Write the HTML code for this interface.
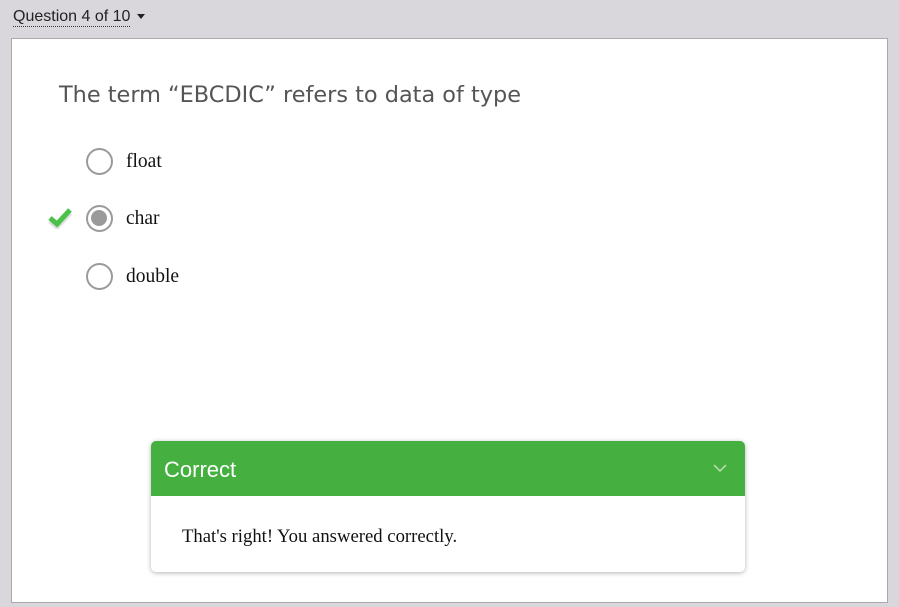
<!DOCTYPE html>
<html><head><style>
body{margin:0;width:899px;height:607px;background:#d9d7dc;position:relative;overflow:hidden;font-family:"Liberation Serif",serif}
.top{position:absolute;left:13px;top:8px;font:16px "Liberation Sans",sans-serif;color:#222;border-bottom:1px dotted #333;line-height:18px}
.caret{position:absolute;left:137px;top:14px;width:0;height:0;border-left:4.5px solid transparent;border-right:4.5px solid transparent;border-top:5px solid #222}
.card{position:absolute;left:11px;top:38px;width:875px;height:563px;background:#fff;border:1px solid #aaa}
.q{position:absolute;left:59px;top:82px;font:22.4px "DejaVu Sans",sans-serif;color:#555}
.opt{position:absolute;left:126px;font-size:19.5px;color:#111}
.rad{position:absolute;left:86px;border:2.5px solid #9a9a9a;border-radius:50%;box-sizing:border-box;width:27px;height:27px}
.dot{position:absolute;left:3px;top:3px;width:16px;height:16px;border-radius:50%;background:#9a9a9a}
.fb{position:absolute;left:151px;top:441px;width:594px;height:131px;background:#fff;border-radius:5px;box-shadow:0 1px 5px rgba(0,0,0,.3);overflow:hidden}
.fh{height:55px;background:#45b03f;color:#fff;font:22px "Liberation Sans",sans-serif;line-height:58px;padding-left:13px;position:relative}
.fb p{margin:0;position:absolute;left:31px;top:85px;font-size:18.7px;color:#111}
</style></head><body>
<div class="top">Question 4 of 10</div><div class="caret"></div>
<div class="card"></div>
<div class="q">The term “EBCDIC” refers to data of type</div>
<div class="rad" style="top:148px"></div><div class="opt" style="top:151px">float</div>
<svg style="position:absolute;left:47px;top:207px" width="27" height="22" viewBox="0 0 27 22"><path d="M3 12 L10 18 L23 4" stroke="#ddd" stroke-width="5" fill="none" transform="translate(0,2)"/><path d="M3 11 L10 17 L23 3" stroke="#4cc14a" stroke-width="5" fill="none"/></svg>
<div class="rad" style="top:205px"><div class="dot"></div></div><div class="opt" style="top:208px">char</div>
<div class="rad" style="top:263px"></div><div class="opt" style="top:266px">double</div>
<div class="fb"><div class="fh">Correct<svg style="position:absolute;right:18px;top:23px" width="14" height="9"><path d="M1 1 L7 7 L13 1" stroke="#b8e0b5" stroke-width="1.5" fill="none"/></svg></div>
<p>That's right! You answered correctly.</p></div>
</body></html>
